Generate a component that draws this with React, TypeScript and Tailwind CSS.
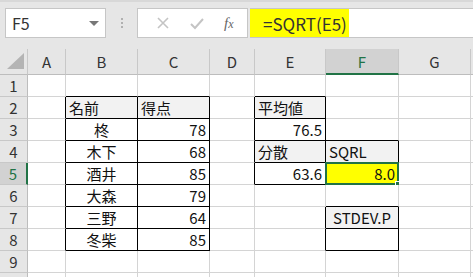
import React from "react";

const FONT = { fontFamily: '"Noto Sans CJK JP", "Noto Sans", sans-serif' };

type Cell = {
  t?: string;
  align?: "l" | "c" | "r";
  grey?: boolean;
  yellow?: boolean;
  br?: boolean; // black right
  bb?: boolean; // black bottom
  sel?: boolean;
};

const cols = ["A", "B", "C", "D", "E", "F", "G", "H"];

function buildRows(): Cell[][] {
  const rows: Cell[][] = [];
  for (let r = 0; r < 10; r++) rows.push(cols.map(() => ({})));
  const set = (r: number, c: number, v: Cell) => {
    rows[r - 1][c] = { ...rows[r - 1][c], ...v };
  };
  for (let r = 2; r <= 8; r++) {
    set(r, 0, { br: true });
    set(r, 1, { br: true, bb: true });
    set(r, 2, { br: true, bb: true });
  }
  set(1, 1, { bb: true });
  set(1, 2, { bb: true });
  set(2, 1, { t: "名前", align: "l", grey: true });
  set(2, 2, { t: "得点", align: "l", grey: true });
  const names = ["柊", "木下", "酒井", "大森", "三野", "冬柴"];
  const scores = ["78", "68", "85", "79", "64", "85"];
  names.forEach((n, i) => {
    set(3 + i, 1, { t: n, align: "c" });
    set(3 + i, 2, { t: scores[i], align: "r" });
  });
  set(1, 4, { bb: true });
  for (let r = 2; r <= 5; r++) {
    set(r, 3, { br: true });
    set(r, 4, { br: true, bb: true });
  }
  set(2, 4, { t: "平均値", align: "l", grey: true });
  set(3, 4, { t: "76.5", align: "r" });
  set(4, 4, { t: "分散", align: "l", grey: true });
  set(5, 4, { t: "63.6", align: "r" });
  set(3, 5, { bb: true });
  set(4, 5, { t: "SQRL", align: "l", grey: true, br: true, bb: true });
  set(5, 5, { t: "8.0", align: "r", yellow: true, sel: true });
  set(6, 5, { bb: true });
  set(7, 4, { br: true });
  set(8, 4, { br: true });
  set(7, 5, { t: "STDEV.P", align: "c", grey: true, br: true, bb: true });
  set(8, 5, { br: true, bb: true });
  return rows;
}

function GridCell({ c }: { c: Cell }) {
  const bg = c.yellow ? "bg-[#ffff00]" : c.grey ? "bg-[#f2f2f2]" : "bg-white";
  const al =
    c.align === "c" ? "justify-center" : c.align === "r" ? "justify-end pr-[3px]" : "justify-start pl-[3px]";
  return (
    <div
      className={`relative flex items-center h-[22px] border-r border-b text-[15px] text-[#111] ${bg} ${al} ${
        c.br ? "border-r-black" : "border-r-[#d4d4d4]"
      } ${c.bb ? "border-b-black" : "border-b-[#d4d4d4]"}`}
    >
      <span className="leading-none whitespace-nowrap">{c.t}</span>
      {c.sel && (
        <>
          <div className="absolute left-[-1px] top-[-1px] right-[-1px] bottom-[-1px] border-2 border-[#217346] pointer-events-none" />
          <div className="absolute right-[-3px] bottom-[-3px] w-[6px] h-[6px] bg-[#217346] border border-white" />
        </>
      )}
    </div>
  );
}

export default function App() {
  const rows = buildRows();
  return (
    <div className="w-[473px] h-[277px] overflow-hidden bg-white" style={FONT}>
      <div className="h-[49px] bg-[#e6e6e6] border-t-2 border-t-[#d8d8d8] flex items-start pt-[6px] pl-[5px]">
        <div className="w-[101px] h-[30px] bg-white border border-[#c6c6c6] flex items-center justify-between pl-[6px] pr-[6px]">
          <span className="text-[16px] text-[#333] leading-none">F5</span>
          <div className="w-0 h-0 border-l-[5px] border-r-[5px] border-t-[5px] border-l-transparent border-r-transparent border-t-[#777]" />
        </div>
        <div className="w-[31px] h-[30px] flex flex-col items-center justify-center gap-[2px]">
          <div className="w-[2px] h-[2px] bg-[#b0b0b0]" />
          <div className="w-[2px] h-[2px] bg-[#b0b0b0]" />
          <div className="w-[2px] h-[2px] bg-[#b0b0b0]" />
        </div>
        <div className="relative w-[111px] h-[30px] bg-white border border-[#c6c6c6] flex items-center">
          <svg width="80" height="28" viewBox="0 0 80 28">
            <path d="M20 9 L30 19 M30 9 L20 19" stroke="#c4c4c4" strokeWidth="1.6" fill="none" />
            <path d="M53 15 L57 19 L65 10" stroke="#c4c4c4" strokeWidth="2" fill="none" />
          </svg>
          <span
            className="ml-[6px] text-[15px] italic text-[#666] leading-none"
            style={{ fontFamily: '"Liberation Serif", serif' }}
          >
            f<span className="text-[12px]">x</span>
          </span>
        </div>
        <div className="flex-1 h-[30px] ml-[2px] bg-white border-t border-b border-[#c6c6c6] flex items-stretch">
          <div className="w-[99px] bg-[#ffff00] flex items-center pl-[13px]">
            <span className="text-[17px] text-[#333] leading-none">=SQRT(E5)</span>
          </div>
        </div>
      </div>
      <div className="grid grid-cols-[28px_38px_72px_72px_45px_71px_73px_72px_1fr]">
        <div className="relative h-[26px] bg-[#e6e6e6] border-r border-b border-r-[#c8c8c8] border-b-[#bdbdbd]">
          <div
            className="absolute right-[3px] bottom-[5px] w-0 h-0 border-l-[17px] border-l-transparent"
            style={{ borderBottom: "16px solid #b4b4b4" }}
          />
        </div>
        {cols.map((l, i) => {
          const active = l === "F";
          return (
            <div
              key={l}
              className={`flex items-center justify-center h-[26px] border-r text-[15px] leading-none ${
                active
                  ? "bg-[#d2d2d2] text-[#217346] border-b-2 border-b-[#217346] border-r-[#c8c8c8]"
                  : "bg-[#e6e6e6] text-[#333] border-b border-b-[#bdbdbd] border-r-[#c8c8c8]"
              }`}
            >
              {i < 7 ? l : ""}
            </div>
          );
        })}
        {rows.map((row, ri) => (
          <React.Fragment key={ri}>
            <div
              className={`flex items-center justify-center h-[22px] border-b border-b-[#c8c8c8] text-[15px] leading-none ${
                ri === 4
                  ? "bg-[#d2d2d2] text-[#217346] border-r-2 border-r-[#217346]"
                  : "bg-[#e6e6e6] text-[#333] border-r border-r-[#bdbdbd]"
              }`}
            >
              {ri < 9 ? ri + 1 : ""}
            </div>
            {row.map((c, ci) => (
              <GridCell key={ci} c={c} />
            ))}
          </React.Fragment>
        ))}
      </div>
    </div>
  );
}
